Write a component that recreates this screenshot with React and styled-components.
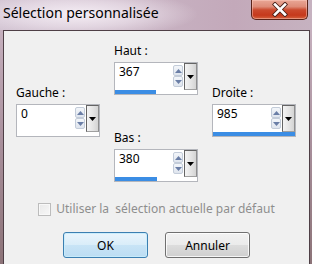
import React from 'react';
import styled, { createGlobalStyle } from 'styled-components';

const GlobalStyle = createGlobalStyle`
  html, body {
    margin: 0;
    padding: 0;
    overflow: hidden;
    background: #ffffff;
  }
  body {
    font-family: "Noto Sans", "DejaVu Sans", sans-serif;
  }
`;

const Window = styled.div`
  width: 312px;
  height: 264px;
  display: flex;
  flex-direction: column;
  background: linear-gradient(180deg, #cdbac8 0%, #c3adbb 15%, #a88f9b 55%, #8c7378 100%);
  overflow: hidden;
`;

const TitleBar = styled.div`
  height: 30px;
  flex-shrink: 0;
  display: flex;
  justify-content: space-between;
  align-items: flex-start;
  padding-left: 3px;
  padding-right: 4px;
  background:
    radial-gradient(ellipse 120px 24px at 78px 14px, rgba(250, 244, 250, 0.9) 0%, rgba(244, 236, 244, 0.55) 55%, rgba(240, 230, 240, 0) 100%),
    linear-gradient(90deg, #cfc0cf 0%, #c8b3c3 45%, #c3a9ba 75%, #c6b2c0 100%);
`;

const Title = styled.div`
  font-size: 14px;
  line-height: 20px;
  margin-top: 3px;
  color: #000000;
  white-space: nowrap;
`;

const CloseButton = styled.div`
  width: 57px;
  height: 20px;
  box-sizing: border-box;
  border: 1px solid #5a2419;
  border-top: none;
  border-radius: 0 0 5px 5px;
  background: linear-gradient(180deg, #e9a796 0%, #de8c78 35%, #cb4a2e 52%, #c6391c 80%, #d4623f 100%);
  box-shadow: inset 0 0 0 1px rgba(255, 210, 200, 0.45);
  display: flex;
  align-items: center;
  justify-content: center;
`;

const Client = styled.div`
  flex: 1;
  margin: 0 2px 0 3px;
  border: 1px solid #4e3f46;
  border-bottom: none;
  background: #f0f0f0;
  display: flex;
  flex-direction: column;
  font-size: 12px;
  color: #000000;
`;

const SpinArea = styled.div`
  display: flex;
  gap: 14px;
  padding: 12px 0 0 12px;
`;

const Column = styled.div`
  display: flex;
  flex-direction: column;
  gap: 35px;
  margin-top: ${({ $offset }) => $offset || 0}px;
`;

const Group = styled.div`
  display: flex;
  flex-direction: column;
`;

const Label = styled.div`
  line-height: 16px;
  margin-bottom: 3px;
  white-space: nowrap;
`;

const SpinBox = styled.div`
  width: 84px;
  height: 33px;
  box-sizing: border-box;
  border: 1px solid #b4b6bc;
  background: #ffffff;
  display: flex;
  flex-direction: column;
`;

const FieldRow = styled.div`
  height: 27px;
  display: flex;
`;

const Value = styled.div`
  flex: 1;
  padding: 1px 0 0 4px;
  line-height: 16px;
`;

const Spinner = styled.div`
  width: 10px;
  margin: 2px 1px 0 0;
  display: flex;
  flex-direction: column;
`;

const SpinButton = styled.div`
  height: 11px;
  box-sizing: border-box;
  border: 1px solid #c3ccd9;
  border-radius: 2px;
  background: linear-gradient(180deg, #f3f6fa 0%, #dfe5ee 100%);
  display: flex;
  align-items: center;
  justify-content: center;
`;

const DropButton = styled.div`
  width: 13px;
  height: 27px;
  box-sizing: border-box;
  border: 1px solid #646464;
  border-right-color: #8e8e8e;
  border-bottom-color: #a0a0a0;
  background: linear-gradient(90deg, #f4f4f4 0%, #e2e2e2 60%, #d4d4d4 100%);
  display: flex;
  align-items: center;
  justify-content: center;
`;

const BarTrack = styled.div`
  height: 4px;
`;

const BarFill = styled.div`
  height: 100%;
  background: #3b8de4;
`;

const CheckRow = styled.label`
  display: flex;
  align-items: center;
  justify-content: center;
  gap: 5px;
  margin-top: 19px;
  line-height: 16px;
  color: #8e8e8e;
  white-space: pre;
`;

const CheckBox = styled.span`
  width: 13px;
  height: 13px;
  box-sizing: border-box;
  border: 1px solid #bcbcbc;
  background: linear-gradient(135deg, #e9e9e9 0%, #f7f7f7 100%);
  box-shadow: inset 0 0 0 1px #f8f8f8;
`;

const ButtonRow = styled.div`
  display: flex;
  justify-content: center;
  gap: 17px;
  margin-top: 15px;
`;

const Button = styled.button`
  width: 85px;
  height: 26px;
  box-sizing: border-box;
  padding: 0;
  border-radius: 3px;
  font-family: "Noto Sans", "DejaVu Sans", sans-serif;
  font-size: 12px;
  color: #000000;
  border: 1px solid ${({ $primary }) => ($primary ? '#3c7fb1' : '#707070')};
  background: ${({ $primary }) =>
    $primary
      ? 'linear-gradient(180deg, #eaf5fc 0%, #d9edf9 49%, #c8e4f6 50%, #bcddf3 100%)'
      : 'linear-gradient(180deg, #f2f2f2 0%, #ebebeb 49%, #dddddd 50%, #cfcfcf 100%)'};
  box-shadow: inset 0 0 0 1px ${({ $primary }) => ($primary ? 'rgba(200, 236, 252, 0.9)' : 'rgba(255, 255, 255, 0.8)')};
`;

const BAR_MAX = 740;

function Arrow({ up, color }) {
  return (
    <svg width="7" height="4" viewBox="0 0 7 4">
      <polygon points={up ? '0,4 7,4 3.5,0' : '0,0 7,0 3.5,4'} fill={color} />
    </svg>
  );
}

function Spin({ label, value }) {
  const fill = Math.min(1, value / BAR_MAX) * 100;
  return (
    <Group>
      <Label>{label}</Label>
      <SpinBox>
        <FieldRow>
          <Value>{value}</Value>
          <Spinner>
            <SpinButton><Arrow up color="#6a7ea6" /></SpinButton>
            <SpinButton><Arrow color="#6a7ea6" /></SpinButton>
          </Spinner>
          <DropButton>
            <Arrow color="#000000" />
          </DropButton>
        </FieldRow>
        <BarTrack>
          <BarFill style={{ width: `${fill}%` }} />
        </BarTrack>
      </SpinBox>
    </Group>
  );
}

export default function App() {
  return (
    <>
      <GlobalStyle />
      <Window>
        <TitleBar>
          <Title>Sélection personnalisée</Title>
          <CloseButton>
            <svg width="16" height="15" viewBox="0 0 16 15">
              <path d="M3 2.5 L13 12.5 M13 2.5 L3 12.5" stroke="#4a2018" strokeWidth="4.4" strokeLinecap="square" />
              <path d="M3 2.5 L13 12.5 M13 2.5 L3 12.5" stroke="#ffffff" strokeWidth="2.6" strokeLinecap="square" />
            </svg>
          </CloseButton>
        </TitleBar>
        <Client>
          <SpinArea>
            <Column $offset={42}>
              <Spin label="Gauche :" value={0} />
            </Column>
            <Column>
              <Spin label="Haut :" value={367} />
              <Spin label="Bas :" value={380} />
            </Column>
            <Column $offset={42}>
              <Spin label="Droite :" value={985} />
            </Column>
          </SpinArea>
          <CheckRow>
            <CheckBox />
            <span>Utiliser la  sélection actuelle par défaut</span>
          </CheckRow>
          <ButtonRow>
            <Button $primary>OK</Button>
            <Button>Annuler</Button>
          </ButtonRow>
        </Client>
      </Window>
    </>
  );
}
